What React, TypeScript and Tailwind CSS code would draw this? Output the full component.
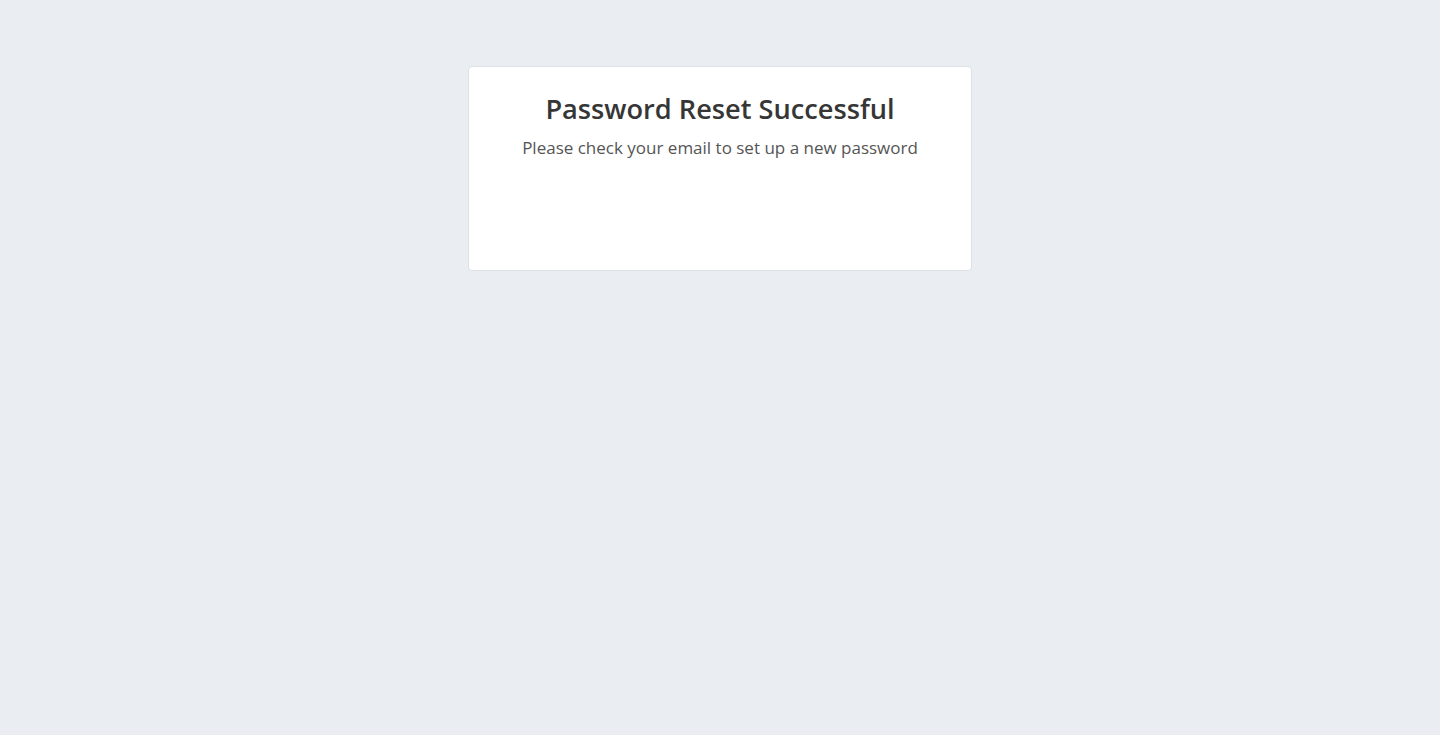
export default function App() {
  return (
    <div className="min-h-screen bg-[#eaeef3] pt-[66px] font-['Open_Sans',sans-serif]">
      <div className="mx-auto h-[205px] w-[504px] rounded border border-[#dde1e6] bg-white px-6 pt-[26px] text-center">
        <h1 className="text-[27.2px] font-semibold leading-[1.2] text-[#363636]">Password Reset Successful</h1>
        <p className="mt-[9px] text-[17px] leading-[1.5] text-[#555555]">Please check your email to set up a new password</p>
      </div>
    </div>
  );
}
